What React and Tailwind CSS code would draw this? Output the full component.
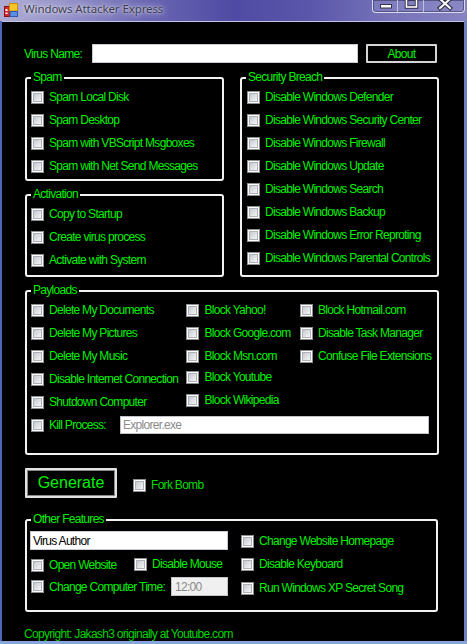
import React from "react";

const GREEN = "text-[#00f000]";

function Box() {
  return (
    <span className="w-[13px] h-[13px] border border-[#8e8f8f] bg-white p-[1px] shrink-0 flex">
      <span className="flex-1 border border-[#aeb2b8] bg-gradient-to-br from-[#c6cad0] to-[#f6f6f6]" />
    </span>
  );
}

function Check({ label, className = "", textClass = "" }) {
  return (
    <div className={"flex items-center h-[23px] " + className}>
      <Box />
      <span className={"ml-[5px] whitespace-nowrap leading-[14px] " + GREEN + " " + textClass}>{label}</span>
    </div>
  );
}

function Group({ title, className = "", children }) {
  return (
    <div className={"relative border-2 border-[#f2f2f2] rounded-[3px] " + className}>
      <span className={"absolute -top-[9px] left-[4px] px-[2px] bg-black leading-[14px] whitespace-nowrap " + GREEN}>
        {title}
      </span>
      {children}
    </div>
  );
}

function AppIcon() {
  return (
    <svg width="14" height="14" viewBox="0 0 14 14">
      <rect x="0.5" y="3.5" width="5" height="10" fill="#d8262a" stroke="#8a1414" />
      <rect x="1.5" y="6" width="2" height="2" fill="#fff" />
      <rect x="1.5" y="9.5" width="2" height="1.5" fill="#fff" />
      <rect x="5.5" y="0.5" width="8" height="7.5" fill="#f6c52a" stroke="#c98a10" />
      <rect x="6" y="8.5" width="7.5" height="5" fill="#5b8fe0" stroke="#2b5ab0" />
    </svg>
  );
}

export default function App() {
  return (
    <div className="w-[467px] h-[644px] relative overflow-hidden flex flex-col bg-[#6c77bd] font-['Liberation_Sans',Arial,sans-serif] text-[12px] tracking-[-0.7px]">
      {/* title bar */}
      <div className="h-[21px] shrink-0 relative flex items-center pb-[3px] bg-[linear-gradient(90deg,#aeacd4_0%,#9593c9_14%,#6a66b2_32%,#4f4ba4_50%,#5a56aa_66%,#7471b8_82%,#8683c2_100%)]">
        <div className="ml-[4px] mt-[2px] flex">
          <AppIcon />
        </div>
        <span className="ml-[6px] font-['Noto_Sans',sans-serif] text-[11.5px] tracking-[-0.1px] text-[#3b3b4e] [text-shadow:0_0_6px_rgba(255,255,255,0.9),0_0_2px_rgba(255,255,255,0.7)]">
          Windows Attacker Express
        </span>
        <div className="absolute top-0 right-[2px] w-[93px] h-[13px] flex border border-t-0 border-[#dcdaf0] rounded-b-[4px] bg-[#8f8cc6]/40 shadow-[inset_0_0_0_1px_rgba(40,40,80,0.5)]">
          <div className="w-[25px] h-full border-r border-[#cfcdea]/80">
            <svg width="25" height="12">
              <rect x="7.5" y="4.5" width="11" height="3.5" fill="#ffffff" stroke="#34344e" />
            </svg>
          </div>
          <div className="w-[26px] h-full border-r border-[#cfcdea]/80">
            <svg width="26" height="12">
              <rect x="8.5" y="-1" width="10" height="8" fill="none" stroke="#2e2e48" strokeWidth="3.5" />
              <rect x="8.5" y="-1" width="10" height="8" fill="none" stroke="#ffffff" strokeWidth="1.6" />
            </svg>
          </div>
          <div className="flex-1 h-full">
            <svg width="41" height="12">
              <path d="M16 -1 L26 8 M26 -1 L16 8" stroke="#2e2e48" strokeWidth="4.2" strokeLinecap="square" />
              <path d="M16 -1 L26 8 M26 -1 L16 8" stroke="#ffffff" strokeWidth="2" strokeLinecap="square" />
            </svg>
          </div>
        </div>
      </div>

      {/* body row */}
      <div className="flex flex-1">
        <div className="w-[2px] shrink-0 bg-[#4b66b4]" />
        <div className="w-[462px] h-[620px] border-t border-[#c4c2e6] bg-black pl-[23px] flex flex-col items-start">
          {/* virus name row */}
          <div className="mt-[22px] h-[19px] flex items-center">
            <span className={"ml-[-1px] w-[68px] leading-[14px] " + GREEN}>Virus Name:</span>
            <div className="w-[266px] h-[19px] bg-white border border-[#c9cbd2]" />
            <div className={"ml-[8px] w-[71px] h-[19px] bg-black border-2 border-[#d4d4d4] rounded-[1px] flex items-center justify-center leading-[14px] " + GREEN}>
              About
            </div>
          </div>

          {/* groups row */}
          <div className="mt-[14px] flex gap-[16px] items-start">
            <div className="flex flex-col">
              <Group title="Spam" className="w-[199px] h-[104px] pl-[4px] pt-[6.5px]">
                <Check label="Spam Local Disk" />
                <Check label="Spam Desktop" />
                <Check label="Spam with VBScript Msgboxes" />
                <Check label="Spam with Net Send Messages" />
              </Group>
              <Group title="Activation" className="mt-[13px] w-[199px] h-[83px] pl-[4px] pt-[6.5px]">
                <Check label="Copy to Startup" />
                <Check label="Create virus process" />
                <Check label="Activate with System" />
              </Group>
            </div>
            <Group title="Security Breach" className="w-[199px] h-[200px] pl-[5px] pt-[6.5px]">
              <Check label="Disable Windows Defender" />
              <Check label="Disable Windows Security Center" />
              <Check label="Disable Windows Firewall" />
              <Check label="Disable Windows Update" />
              <Check label="Disable Windows Search" />
              <Check label="Disable Windows Backup" />
              <Check label="Disable Windows Error Reproting" />
              <Check label="Disable Windows Parental Controls" />
            </Group>
          </div>

          {/* payloads */}
          <Group title="Payloads" className="mt-[13px] w-[414px] h-[166px] pl-[4px] pt-[6.5px]">
            <div className="flex items-start">
              <div className="w-[156px] flex flex-col">
                <Check label="Delete My Documents" />
                <Check label="Delete My Pictures" />
                <Check label="Delete My Music" />
                <Check label="Disable Internet Connection" />
                <Check label="Shutdown Computer" />
              </div>
              <div className="w-[114px] flex flex-col">
                <Check label="Block Yahoo!" />
                <Check label="Block Google.com" />
                <Check label="Block Msn.com" />
                <Check label="Block Youtube" className="-mt-[2px]" />
                <Check label="Block Wikipedia" />
              </div>
              <div className="flex flex-col">
                <Check label="Block Hotmail.com" />
                <Check label="Disable Task Manager" />
                <div className="flex items-center h-[23px]">
                  <Box />
                  <span className={"ml-[4px] pl-[1px] w-[120px] h-[17px] bg-black flex items-center whitespace-nowrap " + GREEN}>
                    Confuse File Extensions
                  </span>
                </div>
              </div>
            </div>
            <div className="flex items-center h-[23px]">
              <Box />
              <span className={"ml-[5px] w-[71px] leading-[14px] " + GREEN}>Kill Process:</span>
              <div className="w-[309px] h-[18px] bg-white border border-[#c0c2c8] flex items-center pl-[2px] text-[#8c8c8c] leading-[14px]">
                Explorer.exe
              </div>
            </div>
          </Group>

          {/* generate row */}
          <div className="mt-[13px] h-[30px] flex items-center">
            <div className="w-[92px] h-[30px] bg-black border-2 border-[#e2e2e2] shadow-[inset_0_0_0_1px_#8a8a8a] rounded-[1px] flex items-center justify-center">
              <span className="text-[16px] tracking-normal leading-[18px] text-[#00f000]">Generate</span>
            </div>
            <Check label="Fork Bomb" className="ml-[16px] mt-[4px]" textClass="!text-[#00dc00]" />
          </div>

          {/* other features */}
          <Group title="Other Features" className="mt-[21px] w-[413px] h-[93px] flex">
            <div className="w-[214px] pl-[3px] pt-[10px] flex flex-col">
              <div className="w-[198px] h-[19px] bg-white border border-[#c9cbd2] flex items-center pl-[2px] text-black leading-[14px]">
                Virus Author
              </div>
              <div className="mt-[6px] h-[18px] flex items-center pl-[1px]">
                <Check label="Open Website" className="w-[103px] !h-[18px]" />
                <Check label="Disable Mouse" className="!h-[18px] -mt-[2px]" />
              </div>
              <div className="mt-[3px] h-[19px] flex items-center pl-[1px]">
                <Check label="Change Computer Time:" className="w-[140px] !h-[19px]" />
                <div className="w-[57px] h-[19px] bg-[#f0f0f0] border border-[#c3c4c8] flex items-center pl-[3px] text-[#8a8a8a] leading-[14px]">
                  12:00
                </div>
              </div>
            </div>
            <div className="pt-[10px] flex flex-col">
              <Check label="Change Website Homepage" className="!h-[20px]" />
              <Check label="Disable Keyboard" className="!h-[20px] mt-[3px]" />
              <Check label="Run Windows XP Secret Song" className="!h-[20px] mt-[4px]" />
            </div>
          </Group>

          <div className="mt-[15px] ml-[-1px] leading-[14px] text-[#00d400] whitespace-nowrap">
            Copyright: Jakash3 originally at Youtube.com
          </div>
        </div>
        <div className="flex-1 bg-[#7080c4]" />
      </div>
      <div className="h-[3px] shrink-0 bg-[#86a6dc]" />
    </div>
  );
}
